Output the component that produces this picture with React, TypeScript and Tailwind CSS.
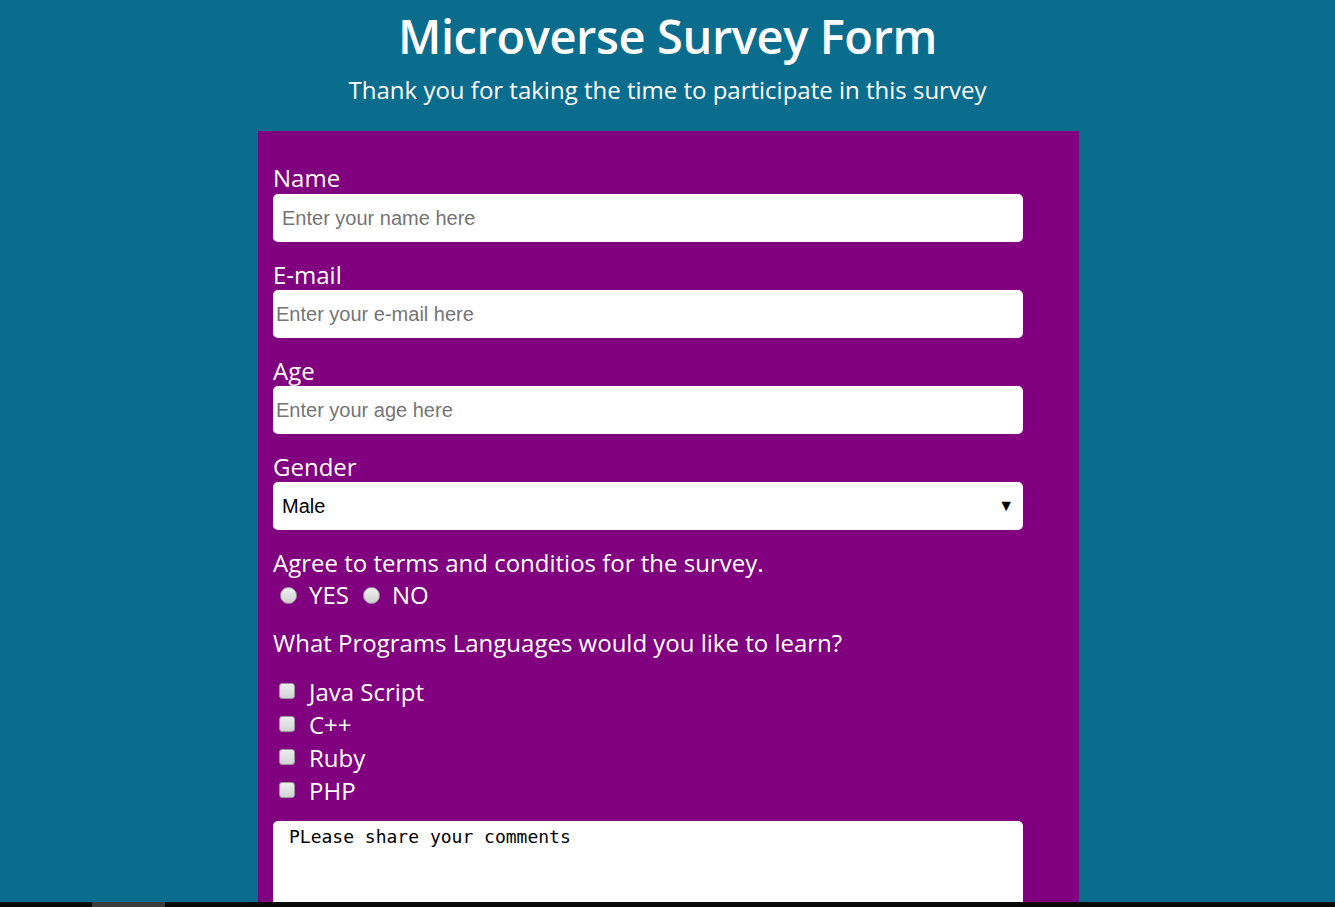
import React from 'react';

const sans = "font-['Open_Sans',sans-serif]";

function Label({ children, htmlFor }: { children: React.ReactNode; htmlFor?: string }) {
  return (
    <label htmlFor={htmlFor} className="block text-[24px] leading-[30px] text-white">
      {children}
    </label>
  );
}

function Radio({ label }: { label: string }) {
  return (
    <label className="flex items-center">
      <span className="block h-[17px] w-[17px] rounded-full border border-[#a0a0a0] bg-gradient-to-b from-[#f2f2f2] to-[#cfcfcf]" />
      <span className="ml-[12px] mr-[14px] text-[24px] leading-[30px] text-white">{label}</span>
    </label>
  );
}

function Check({ label }: { label: string }) {
  return (
    <label className="flex h-[33px] items-center pl-[6px]">
      <span className="-mt-[2px] block h-[16px] w-[16px] rounded-[3px] border border-[#9a9a9a] bg-gradient-to-b from-[#ededed] to-[#d2d2d2]" />
      <span className="ml-[14px] text-[24px] leading-[30px] text-white">{label}</span>
    </label>
  );
}

export default function App() {
  const inputCls =
    "block h-[48px] w-[750px] rounded-[5px] bg-white text-[20px] text-black outline-none placeholder:text-[#757575] font-['Liberation_Sans',Arial,sans-serif]";

  return (
    <div className={`relative h-[907px] overflow-hidden bg-[#0b6d8e] ${sans}`}>
      <header className="pt-[4px] text-center text-white">
        <h1 className="text-[47px] font-semibold leading-[64px] tracking-[-0.4px]">Microverse Survey Form</h1>
        <p className="mt-[6px] text-[24px] leading-[32px]">Thank you for taking the time to participate in this survey</p>
      </header>

      <form className="ml-[258px] mt-[25px] w-[821px] bg-[#800080] px-[15px] pt-[32px] pb-[40px]">
        <div>
          <Label htmlFor="name">Name</Label>
          <input id="name" className={`${inputCls} mt-px pl-[9px]`} placeholder="Enter your name here" />
        </div>
        <div className="mt-[18px]">
          <Label htmlFor="email">E-mail</Label>
          <input id="email" className={`${inputCls} pl-[3px]`} placeholder="Enter your e-mail here" />
        </div>
        <div className="mt-[18px]">
          <Label htmlFor="age">Age</Label>
          <input id="age" className={`${inputCls} pl-[3px]`} placeholder="Enter your age here" />
        </div>
        <div className="mt-[18px]">
          <Label htmlFor="gender">Gender</Label>
          <div className="relative w-[750px]">
            <select
              id="gender"
              className={`${inputCls} appearance-none pl-[9px]`}
              defaultValue="male"
            >
              <option value="male">Male</option>
              <option value="female">Female</option>
            </select>
            <span className="pointer-events-none absolute right-[9px] top-[13px] text-[16px] leading-[20px] text-black">▼</span>
          </div>
        </div>
        <div className="mt-[18px]">
          <Label>Agree to terms and conditios for the survey.</Label>
          <div className="flex items-center pl-[7px] pt-[2px]">
            <Radio label="YES" />
            <Radio label="NO" />
          </div>
        </div>
        <div className="mt-[18px]">
          <Label>What Programs Languages would you like to learn?</Label>
          <div className="mt-[17px]">
            <Check label="Java Script" />
            <Check label="C++" />
            <Check label="Ruby" />
            <Check label="PHP" />
          </div>
        </div>
        <textarea
          className="mt-[14px] block h-[140px] w-[750px] resize-none rounded-[5px] bg-white px-[16px] pt-[4px] text-[18px] leading-[24px] text-black outline-none font-['DejaVu_Sans_Mono',monospace]"
          defaultValue="PLease share your comments"
        />
      </form>

      <div className="absolute bottom-0 left-0 h-[5px] w-full bg-[#0a0a0a]">
        <div className="ml-[92px] h-full w-[73px] bg-[#3c3c3c]" />
      </div>
    </div>
  );
}
